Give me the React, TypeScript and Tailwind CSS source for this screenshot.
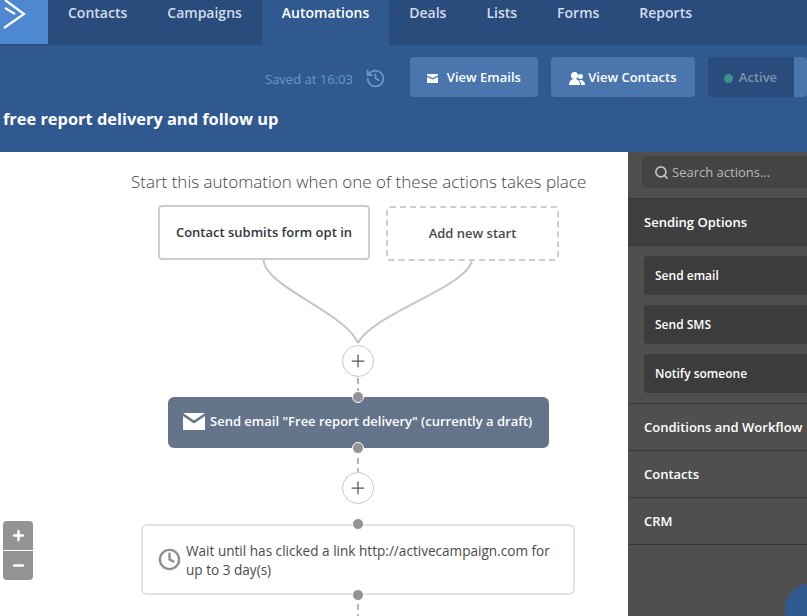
import { Clock, History, Minus, Plus, Search } from 'lucide-react';

const tabs = ['Contacts', 'Campaigns', 'Automations', 'Deals', 'Lists', 'Forms', 'Reports'];
const sendingOptions = ['Send email', 'Send SMS', 'Notify someone'];
const otherSections = ['Conditions and Workflow', 'Contacts', 'CRM'];

function Dot({ className }: { className: string }) {
  return <div className={`absolute left-[352px] size-[12px] rounded-full bg-[#939393] border border-white ${className}`} />;
}

function AddButton({ className }: { className: string }) {
  return (
    <button className={`absolute left-[342px] size-[32px] rounded-full bg-white border border-[#c8c8c8] flex items-center justify-center text-[#555] ${className}`}>
      <Plus size={20} strokeWidth={1.5} />
    </button>
  );
}

export default function App() {
  return (
    <div className="w-[807px] h-[616px] overflow-hidden bg-white font-['Open_Sans',sans-serif] flex flex-col">
      {/* top bar */}
      <header className="h-[152px] shrink-0 bg-[#30598f]">
        <nav className="h-[45px] bg-[#2a4c7d] flex">
          <div className="w-[48px] h-[44px] bg-[#4d88d0]">
            <svg width="26" height="30" viewBox="0 0 26 30" fill="none" stroke="white" strokeWidth="2.200" className="ml-[3px]">
              <path d="M2 0 L21 14 L1 28" />
              <path d="M2 8 L12 14" />
            </svg>
          </div>
          {tabs.map(t => (
            <a key={t}
              className={`h-[45px] px-5 pt-[3px] text-[14px] font-semibold leading-[19px] ${t === 'Automations' ? 'bg-[#30598f] text-white' : 'text-[#d3dce8]'}`}>
              {t}
            </a>
          ))}
        </nav>
        <div className="flex items-center h-[40px] mt-[12px] pl-[265px]">
          <span className="pt-[5px] text-[13px] text-[#6b98d2]">Saved at 16:03</span>
          <History size={21} strokeWidth={2} className="ml-[12px] mt-[2px] text-[#6b98d2]" />
          <button className="ml-[24px] w-[128px] h-[40px] pt-[2px] rounded bg-[#4a75ad] text-white text-[13px] font-semibold flex items-center justify-center">
            <svg width="11" height="9" viewBox="0 0 11 9" fill="white" className="mr-[9px] shrink-0">
              <path d="M0 0 H11 V1.500 L5.500 4 L0 1.500 Z" />
              <path d="M0 3 L5.500 5.500 L11 3 V9 H0 Z" />
            </svg>
            View Emails
          </button>
          <button className="ml-[13px] w-[144px] h-[40px] pt-[2px] rounded bg-[#4a75ad] text-white text-[13px] font-semibold flex items-center justify-center">
            <svg width="16" height="13" viewBox="0 0 16 13" fill="white" className="mr-[3px] shrink-0">
              <circle cx="5.500" cy="3.500" r="3.500" />
              <path d="M0 13 C0 8.500 3 7 5.500 7 C8 7 11 8.500 11 13 Z" />
              <circle cx="11.500" cy="4.500" r="2.500" />
              <path d="M10 8 C13 7.500 16 9 16 13 H12 C12 11 11.500 9 10 8 Z" />
            </svg>
            View Contacts
          </button>
          <div className="ml-[13px] w-[99px] h-[40px] flex rounded overflow-hidden">
            <div className="w-[86px] pt-[2px] bg-[#2a4c7d] flex items-center pl-[16px] text-[13px] font-semibold text-[#7f93b0]">
              <span className="size-[9px] rounded-full bg-[#3e8f8f] mr-[6px]" />
              Active
            </div>
            <div className="flex-1 bg-[#4a75ad]" />
          </div>
        </div>
        <h1 className="ml-[3px] mt-[10px] text-[16.400px] font-bold leading-[24px] text-white whitespace-nowrap">free report delivery and follow up</h1>
      </header>

      <div className="flex-1 flex min-h-0">
        {/* canvas, y offsets are relative to 152 */}
        <main className="relative w-[628px] shrink-0 overflow-hidden">
          <p className="absolute left-[131px] top-[19px] text-[17px] font-light leading-[22px] text-[#444] whitespace-nowrap">
            Start this automation when one of these actions takes place
          </p>

          <svg width="628" height="464" className="absolute left-0 top-0" fill="none">
            <path d="M263.500 108 C265 135 345 160 358 191" stroke="#c6c6c6" strokeWidth="2" />
            <path d="M472 108 C468 135 372 162 358 191" stroke="#c6c6c6" strokeWidth="2" />
            <path d="M358 226 V246 M358 296 V336 M358 368 V372 M358 442 V464" stroke="#b5b5b5" strokeWidth="2" strokeDasharray="6 4" />
          </svg>

          <div className="absolute left-[158px] top-[53px] w-[212px] h-[55px] rounded border-2 border-[#cdcdcd] bg-white flex items-center justify-center text-[13px] font-semibold text-[#33373d]">
            Contact submits form opt in
          </div>
          <div className="absolute left-[386px] top-[54px] w-[173px] h-[55px] rounded border-2 border-dashed border-[#cdcdcd] bg-white flex items-center justify-center text-[13px] font-semibold text-[#4b4b4b]">
            Add new start
          </div>

          <AddButton className="top-[193px]" />

          <div className="absolute left-[168px] top-[245px] w-[381px] h-[51px] pb-[2px] rounded-md bg-[#64748b] flex items-center pl-[15px] text-[13px] font-semibold text-white whitespace-nowrap">
            <svg width="22" height="17" viewBox="0 0 22 17" className="mr-[5px] shrink-0" fill="white">
              <path d="M0 0 H22 L11 7.500 Z" />
              <path d="M0 3 L11 10.500 L22 3 V17 H0 Z" />
            </svg>
            Send email "Free report delivery" (currently a draft)
          </div>
          <Dot className="top-[239px]" />
          <Dot className="top-[290px]" />

          <AddButton className="top-[320px]" />

          <div className="absolute left-[141px] top-[372px] w-[434px] h-[71px] rounded-md border-2 border-[#e2e2e2] bg-white flex items-center pl-[15px] pr-[18px] text-[13.580px] leading-[19px] text-[#4a4a4a]">
            <Clock size={23} strokeWidth={2.500} className="mr-[5px] shrink-0 text-[#8f8f8f]" />
            <span>Wait until has clicked a link http://activecampaign.com for up to 3 day(s)</span>
          </div>
          <Dot className="top-[366px]" />
          <Dot className="top-[437px]" />

          {/* zoom */}
          <div className="absolute left-[3px] top-[369px] w-[30px] h-[59px] flex flex-col rounded overflow-hidden text-white">
            <button className="h-[29px] bg-[#939393] flex items-center justify-center"><Plus size={15} strokeWidth={4} /></button>
            <button className="h-[29px] mt-[1px] bg-[#939393] flex items-center justify-center"><Minus size={15} strokeWidth={4} /></button>
          </div>
        </main>

        {/* sidebar */}
        <aside className="relative flex-1 bg-[#4f4f4f] overflow-hidden text-[13px] font-semibold text-white">
          <div className="h-[46px] pt-[4px] pl-[14px]">
            <div className="h-[32px] w-[200px] pt-[1px] rounded bg-[#444444] flex items-center pl-[12px] font-normal text-[#b9b9b9]">
              <Search size={15} strokeWidth={2.500} className="mr-[3px] text-[#c5c5c5]" />
              Search actions...
            </div>
          </div>
          <div className="h-[48px] pt-[2px] bg-[#3f3f3f] border-y border-[#383838] flex items-center pl-[16px]">Sending Options</div>
          <div className="flex flex-col gap-[10px] pt-[10px] pb-[10px] pl-[16px] border-b border-[#383838]">
            {sendingOptions.map(o => (
              <div key={o} className="h-[39px] w-[200px] rounded bg-[#3c3c3c] flex items-center pl-[11px] text-[12px]">{o}</div>
            ))}
          </div>
          {otherSections.map(s => (
            <div key={s} className="h-[47px] pt-[2px] border-b border-[#383838] flex items-center pl-[16px] whitespace-nowrap">{s}</div>
          ))}
          <div className="absolute left-[157px] top-[432px] size-[50px] rounded-full bg-[#30598f]" />
        </aside>
      </div>
    </div>
  );
}
